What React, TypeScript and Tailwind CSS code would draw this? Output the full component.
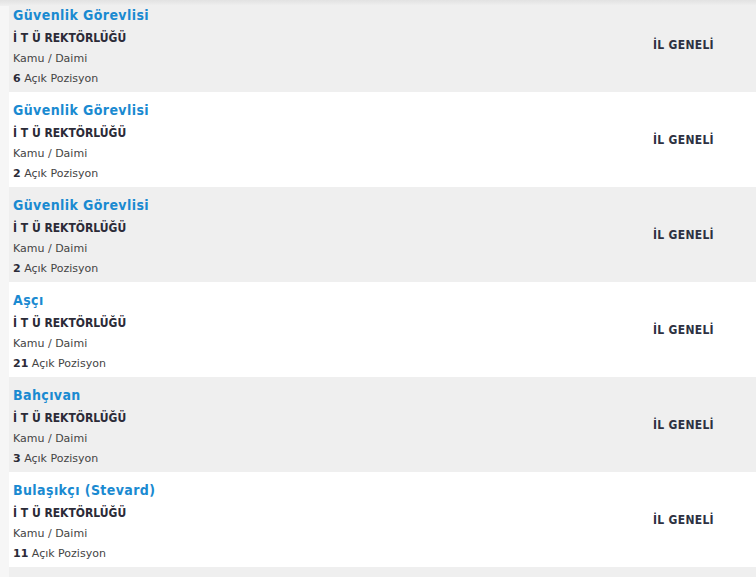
const jobs = [
  { title: "Güvenlik Görevlisi", count: 6 },
  { title: "Güvenlik Görevlisi", count: 2 },
  { title: "Güvenlik Görevlisi", count: 2 },
  { title: "Aşçı", count: 21 },
  { title: "Bahçıvan", count: 3 },
  { title: "Bulaşıkçı (Stevard)", count: 11 },
];

const JobRow = ({ title, count, gray }: { title: string; count: number; gray: boolean }) => (
  <div className={`flex h-[95px] items-start ${gray ? "bg-[#efefef]" : "bg-white"}`}>
    <div className="flex-1 pl-[4px] pt-[8px]">
      <a href="#" className="block h-[20px] text-[14px] font-bold leading-[20px] tracking-[0.4px] text-[#1a8ad1]">
        {title}
      </a>
      <div className="mt-[3px] h-[20px] text-[12px] font-bold leading-[20px] text-[#2b2b38]">
        İ T Ü REKTÖRLÜĞÜ
      </div>
      <div
        className="mt-[1px] h-[20px] text-[11px] leading-[20px] text-[#444]"
        style={{ fontFamily: "'DejaVu Sans', sans-serif" }}
      >
        Kamu / Daimi
      </div>
      <div className="h-[20px] text-[11px] leading-[20px] text-[#444]" style={{ fontFamily: "'DejaVu Sans', sans-serif" }}>
        <b className="text-[#2b2b38]">{count}</b> Açık Pozisyon
      </div>
    </div>
    <div className="w-[103px] pt-[38px] text-[12px] font-bold leading-[20px] tracking-[0.3px] text-[#2d3142]">İL GENELİ</div>
  </div>
);

const App = () => {
  return (
    <div
      className="relative h-[577px] w-[756px] overflow-hidden bg-[#f6f6f6] pl-[9px]"
      style={{ fontFamily: "Tahoma, 'DejaVu Sans Condensed', 'DejaVu Sans', sans-serif" }}
    >
      <div className="absolute left-0 top-0 z-10 h-[6px] w-full bg-gradient-to-b from-[#e2e2e2] to-[#f0f0f0]" />
      <div className="-mt-[3px]">
        {jobs.map((j, i) => (
          <JobRow key={i} title={j.title} count={j.count} gray={i % 2 === 0} />
        ))}
        <div className="h-[20px] bg-[#efefef]" />
      </div>
    </div>
  );
};

export default App;
